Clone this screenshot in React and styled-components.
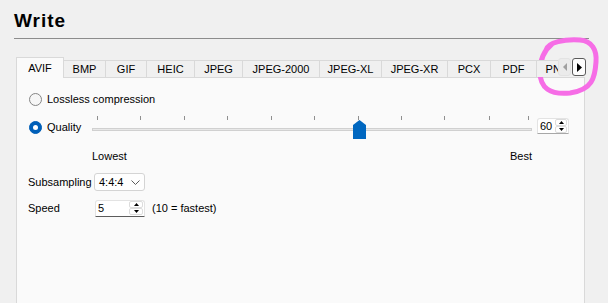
import React from 'react';
import styled, { createGlobalStyle } from 'styled-components';

const GlobalStyle = createGlobalStyle`
  html, body { margin: 0; padding: 0; background: #f0f0f0; }
  body { font-family: "Liberation Sans", Arial, sans-serif; font-size: 11px; color: #000; }
  * { box-sizing: border-box; }
`;

const Page = styled.div`
  position: relative;
  width: 608px;
  height: 303px;
  overflow: hidden;
  padding: 9px 19px 0 14px;
`;

const Title = styled.h1`
  margin: 0;
  font-size: 19px;
  font-weight: 700;
  line-height: 24px;
  letter-spacing: 1px;
  color: #000;
`;

const Rule = styled.div`
  margin-top: 5px;
  height: 1px;
  background: #8c8c8c;
`;

const TabWidget = styled.div`
  margin: 18px 0 0 2px;
  width: 572px;
`;

const TabBar = styled.div`
  display: flex;
  align-items: flex-start;
  height: 20px;
`;

const TabStrip = styled.div`
  position: relative;
  z-index: 1;
  flex: none;
  display: flex;
  align-items: flex-end;
  width: 542px;
  height: 21px;
  overflow: hidden;
`;

const Tab = styled.div`
  flex: none;
  width: ${p => p.$w}px;
  height: ${p => (p.$active ? 21 : 17)}px;
  margin-bottom: ${p => (p.$active ? 0 : 1)}px;
  padding-bottom: ${p => (p.$active ? 1 : 0)}px;
  display: flex;
  align-items: center;
  justify-content: center;
  white-space: nowrap;
  line-height: 14px;
  background: ${p => (p.$active ? '#fafafa' : '#f0f0f0')};
  border-top: 1px solid #d9d9d9;
  border-right: 1px solid #d9d9d9;
  border-left: ${p => (p.$active || p.$first ? '1px solid #d9d9d9' : 'none')};
`;

const ScrollButtons = styled.div`
  display: flex;
  gap: 1px;
  margin-top: 1px;
`;

const ScrollButton = styled.div`
  width: ${p => p.$w}px;
  height: 18px;
  display: flex;
  align-items: center;
  justify-content: center;
  border-radius: 3px;
  background: ${p => (p.$enabled ? '#fdfdfd' : '#ebebeb')};
  border: 1px solid ${p => (p.$enabled ? '#5a5a5a' : '#e3e3e3')};
`;

const Panel = styled.div`
  width: 569px;
  height: 240px;
  background: #fafafa;
  border: 1px solid #d9d9d9;
  padding: 12px 11px;
  display: flex;
  flex-direction: column;
`;

const RadioRow = styled.div`
  display: flex;
  align-items: center;
  gap: 5px;
  height: 18px;
  line-height: 14px;
  width: ${p => (p.$w ? `${p.$w}px` : 'auto')};
  flex: none;
`;

const RadioDot = styled.span`
  flex: none;
  width: 13px;
  height: 13px;
  margin-left: 1px;
  border-radius: 50%;
  display: flex;
  align-items: center;
  justify-content: center;
  background: ${p => (p.$checked ? '#005fb8' : '#f6f6f6')};
  border: 1px solid ${p => (p.$checked ? '#005fb8' : '#858585')};
  &::after {
    content: '';
    display: ${p => (p.$checked ? 'block' : 'none')};
    width: 5px;
    height: 5px;
    border-radius: 50%;
    background: #fff;
  }
`;

const QualityRow = styled.div`
  margin-top: 6px;
  height: 26px;
  display: flex;
  align-items: center;
`;

const SliderSvg = styled.svg`
  flex: none;
  display: block;
`;

const ScaleLabels = styled.div`
  margin: 9px 0 0 64px;
  width: 440px;
  height: 14px;
  line-height: 14px;
  display: flex;
  justify-content: space-between;
`;

const FieldRow = styled.div`
  margin-top: ${p => p.$top}px;
  height: 18px;
  display: flex;
  align-items: center;
  line-height: 14px;
`;

const FieldLabel = styled.span`
  flex: none;
  width: 66px;
`;

const Combo = styled.div`
  flex: none;
  width: 51px;
  height: 18px;
  display: flex;
  align-items: center;
  justify-content: space-between;
  padding: 0 4px 0 4px;
  background: #fefefe;
  border: 1px solid #d4d4d4;
  border-radius: 3px;
`;

const SpinFrame = styled.div`
  flex: none;
  display: flex;
  align-items: center;
  width: ${p => p.$w}px;
  height: ${p => p.$h}px;
  margin-left: ${p => p.$ml || 0}px;
  margin-bottom: ${p => p.$mb || 0}px;
  padding-left: 2px;
  background: #fff;
  border: 1px solid #e3e3e3;
  border-bottom-color: ${p => p.$under};
  border-radius: 3px 3px 0 0;
`;

const SpinValue = styled.span`
  flex: 1;
  line-height: 14px;
`;

const SpinButtons = styled.div`
  flex: none;
  display: flex;
  flex-direction: column;
  margin-right: 1px;
`;

const SpinButton = styled.div`
  width: ${p => p.$w}px;
  height: 7px;
  display: flex;
  align-items: center;
  justify-content: center;
  background: #fff;
  border: 1px solid #dcdcdc;
  border-radius: 2px;
`;

const Hint = styled.span`
  margin-left: 7px;
  line-height: 14px;
`;

const Annotation = styled.svg`
  position: absolute;
  left: 0;
  top: 0;
  pointer-events: none;
`;

const tabs = [
  { label: 'AVIF', w: 48 },
  { label: 'BMP', w: 42 },
  { label: 'GIF', w: 41 },
  { label: 'HEIC', w: 48 },
  { label: 'JPEG', w: 48 },
  { label: 'JPEG-2000', w: 77 },
  { label: 'JPEG-XL', w: 62 },
  { label: 'JPEG-XR', w: 66 },
  { label: 'PCX', w: 43 },
  { label: 'PDF', w: 46 },
  { label: 'PNG', w: 42 },
];

const ticks = [7.3, 50.3, 94, 137.3, 181.3, 224.3, 268.3, 311.3, 354.3, 398.7, 437.7];

function SpinBox({ value, w, h, ml, mb, under, bw }) {
  return (
    <SpinFrame $w={w} $h={h} $ml={ml} $mb={mb} $under={under}>
      <SpinValue>{value}</SpinValue>
      <SpinButtons>
        <SpinButton $w={bw}>
          <svg width="5" height="3" viewBox="0 0 5 3"><path d="M0 3 L2.5 0 L5 3 Z" fill="#000" /></svg>
        </SpinButton>
        <SpinButton $w={bw}>
          <svg width="5" height="3" viewBox="0 0 5 3"><path d="M0 0 L5 0 L2.5 3 Z" fill="#000" /></svg>
        </SpinButton>
      </SpinButtons>
    </SpinFrame>
  );
}

function Slider() {
  return (
    <SliderSvg width="446" height="26" viewBox="0 0 446 26">
      {ticks.map((x, i) => (
        <rect key={i} x={Math.round(x)} y="2" width="1" height="4" fill="#8f8f8f" />
      ))}
      <rect x="2.5" y="14.5" width="439" height="2" fill="#e8e8e8" stroke="#d0d0d0" strokeWidth="1" />
      <path d="M269.5 6 L276 11 L276 25 L263 25 L263 11 Z" fill="#0067c0" />
    </SliderSvg>
  );
}

export default function App() {
  return (
    <>
      <GlobalStyle />
      <Page>
        <Title>Write</Title>
        <Rule />
        <TabWidget>
          <TabBar>
            <TabStrip>
              {tabs.map((t, i) => (
                <Tab key={t.label} $w={t.w} $active={i === 0} $first={i === 0}>
                  {t.label}
                </Tab>
              ))}
            </TabStrip>
            <ScrollButtons>
              <ScrollButton $w={13}>
                <svg width="4" height="8" viewBox="0 0 4 8"><path d="M4 0 L0 4 L4 8 Z" fill="#a0a0a0" /></svg>
              </ScrollButton>
              <ScrollButton $w={14} $enabled>
                <svg width="5" height="9" viewBox="0 0 5 9"><path d="M0 0 L5 4.5 L0 9 Z" fill="#000" /></svg>
              </ScrollButton>
            </ScrollButtons>
          </TabBar>
          <Panel>
            <RadioRow>
              <RadioDot />
              <span>Lossless compression</span>
            </RadioRow>
            <QualityRow>
              <RadioRow $w={62}>
                <RadioDot $checked />
                <span>Quality</span>
              </RadioRow>
              <Slider />
              <SpinBox value="60" w={32} h={16} ml={1} mb={2} under="#a8a8a8" bw={12} />
            </QualityRow>
            <ScaleLabels>
              <span>Lowest</span>
              <span>Best</span>
            </ScaleLabels>
            <FieldRow $top={10}>
              <FieldLabel>Subsampling</FieldLabel>
              <Combo>
                <span>4:4:4</span>
                <svg width="9" height="5" viewBox="0 0 9 5"><path d="M0.5 0.5 L4.5 4.5 L8.5 0.5" fill="none" stroke="#5a5a5a" strokeWidth="1" /></svg>
              </Combo>
            </FieldRow>
            <FieldRow $top={8}>
              <FieldLabel>Speed</FieldLabel>
              <SpinBox value="5" w={50} h={17} ml={1} under="#5c5c5c" bw={14} />
              <Hint>(10 = fastest)</Hint>
            </FieldRow>
          </Panel>
        </TabWidget>
        <Annotation width="608" height="303" viewBox="0 0 608 303">
          <path
            d="M546 50 C548 42 565 39 580 40 C592 41 597 50 596 62 C595 78 592 90 570 93 C550 95 540 88 540 72 C540 62 542 52 552 44"
            fill="none"
            stroke="#f66de6"
            strokeWidth="5"
            strokeLinecap="round"
          />
        </Annotation>
      </Page>
    </>
  );
}
